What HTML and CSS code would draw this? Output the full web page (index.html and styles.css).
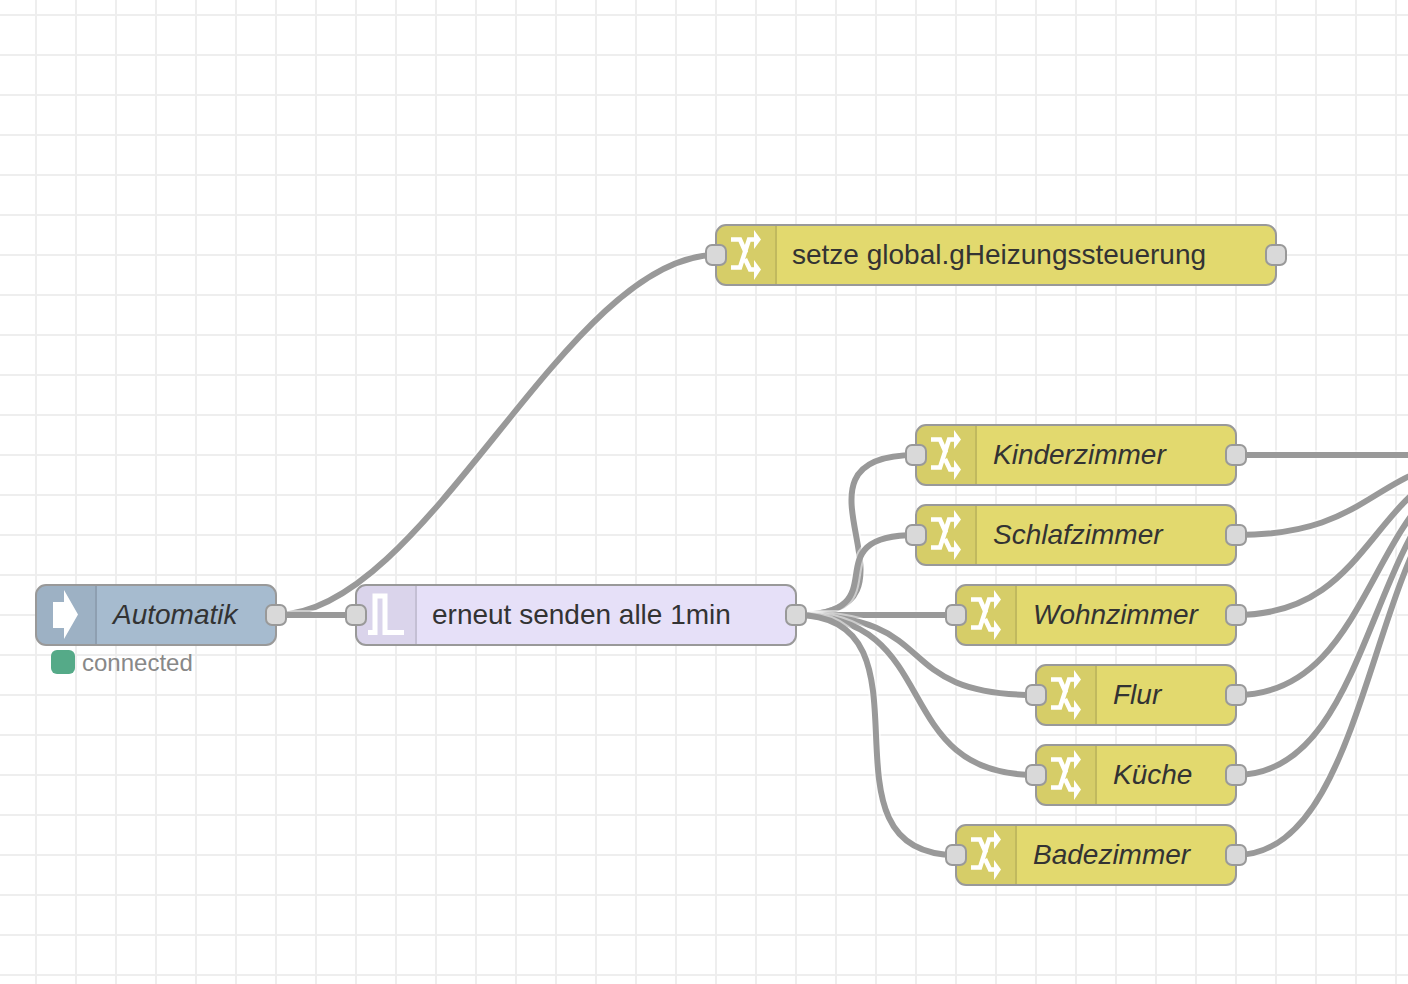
FILE: index.html
```html
<!DOCTYPE html>
<html lang="de">
<head>
<meta charset="utf-8">
<title>Flow</title>
<link rel="stylesheet" href="styles.css">
</head>
<body>
<svg width="0" height="0" class="defs">
  <defs>
    <g id="shuffle">
      <polyline class="ico-line shuffle-line" points="15,14.5 24,14.5 30,28"/>
      <polyline class="ico-line shuffle-line" points="29,34 34,44.5 39,44.5"/>
      <polyline class="ico-line shuffle-line" points="15,42.5 24,42.5 33,14.5 39,14.5"/>
      <polygon class="ico-fill" points="38,5 45,14.5 38,24"/>
      <polygon class="ico-fill" points="38,35 45,44.5 38,55"/>
    </g>
    <path id="wire-a" d="M276 615C426 615 566 255 716 255"/>
    <path id="wire-b" d="M276 615H356"/>
    <path id="wire-c" d="M796 615C946 615 766 455 916 455"/>
    <path id="wire-d" d="M796 615C904 615 808 535 916 535"/>
    <path id="wire-e" d="M796 615H956"/>
    <path id="wire-f" d="M796 615C946 615 886 695 1036 695"/>
    <path id="wire-g" d="M796 615C946 615 886 775 1036 775"/>
    <path id="wire-h" d="M796 615C946 615 806 855 956 855"/>
    <path id="wire-i" d="M1236 455H1516"/>
    <path id="wire-j" d="M1236 535C1386 535 1366 455 1516 455"/>
    <path id="wire-k" d="M1236 615C1386 615 1366 455 1516 455"/>
    <path id="wire-l" d="M1236 695C1386 695 1366 455 1516 455"/>
    <path id="wire-m" d="M1236 775C1386 775 1366 455 1516 455"/>
    <path id="wire-n" d="M1236 855C1386 855 1366 455 1516 455"/>
  </defs>
</svg>
<main class="canvas">
  <svg class="wires" width="1408" height="984" viewBox="0 0 1408 984">
    <g class="wire"><use href="#wire-a" class="outline"/><use href="#wire-a" class="line"/></g>
    <g class="wire"><use href="#wire-b" class="outline"/><use href="#wire-b" class="line"/></g>
    <g class="wire"><use href="#wire-c" class="outline"/><use href="#wire-c" class="line"/></g>
    <g class="wire"><use href="#wire-d" class="outline"/><use href="#wire-d" class="line"/></g>
    <g class="wire"><use href="#wire-e" class="outline"/><use href="#wire-e" class="line"/></g>
    <g class="wire"><use href="#wire-f" class="outline"/><use href="#wire-f" class="line"/></g>
    <g class="wire"><use href="#wire-g" class="outline"/><use href="#wire-g" class="line"/></g>
    <g class="wire"><use href="#wire-h" class="outline"/><use href="#wire-h" class="line"/></g>
    <g class="wire"><use href="#wire-i" class="outline"/><use href="#wire-i" class="line"/></g>
    <g class="wire"><use href="#wire-j" class="outline"/><use href="#wire-j" class="line"/></g>
    <g class="wire"><use href="#wire-k" class="outline"/><use href="#wire-k" class="line"/></g>
    <g class="wire"><use href="#wire-l" class="outline"/><use href="#wire-l" class="line"/></g>
    <g class="wire"><use href="#wire-m" class="outline"/><use href="#wire-m" class="line"/></g>
    <g class="wire"><use href="#wire-n" class="outline"/><use href="#wire-n" class="line"/></g>
  </svg>

  <div class="node inject n-auto">
    <div class="icon"><svg viewBox="1 1 58 58"><polygon class="ico-fill" points="17,17 28,17 28,5 42,29.5 28,54 28,43 17,43"/></svg></div>
    <span class="label italic">Automatik</span>
    <span class="port out"></span>
  </div>
  <div class="status">
    <span class="dot"></span>
    <span class="status-text">connected</span>
  </div>

  <div class="node delay n-delay">
    <span class="port in"></span>
    <div class="icon"><svg viewBox="1 1 58 58"><path class="ico-line" d="M12 47.5H19V11H29V47.5H48"/></svg></div>
    <span class="label">erneut senden alle 1min</span>
    <span class="port out"></span>
  </div>

  <div class="node change n-setze">
    <span class="port in"></span>
    <div class="icon"><svg viewBox="1 1 58 58"><use href="#shuffle"/></svg></div>
    <span class="label">setze global.gHeizungssteuerung</span>
    <span class="port out"></span>
  </div>

  <div class="node change n-kinder">
    <span class="port in"></span>
    <div class="icon"><svg viewBox="1 1 58 58"><use href="#shuffle"/></svg></div>
    <span class="label italic">Kinderzimmer</span>
    <span class="port out"></span>
  </div>
  <div class="node change n-schlaf">
    <span class="port in"></span>
    <div class="icon"><svg viewBox="1 1 58 58"><use href="#shuffle"/></svg></div>
    <span class="label italic">Schlafzimmer</span>
    <span class="port out"></span>
  </div>
  <div class="node change n-wohn">
    <span class="port in"></span>
    <div class="icon"><svg viewBox="1 1 58 58"><use href="#shuffle"/></svg></div>
    <span class="label italic">Wohnzimmer</span>
    <span class="port out"></span>
  </div>
  <div class="node change n-flur">
    <span class="port in"></span>
    <div class="icon"><svg viewBox="1 1 58 58"><use href="#shuffle"/></svg></div>
    <span class="label italic">Flur</span>
    <span class="port out"></span>
  </div>
  <div class="node change n-kueche">
    <span class="port in"></span>
    <div class="icon"><svg viewBox="1 1 58 58"><use href="#shuffle"/></svg></div>
    <span class="label italic">Küche</span>
    <span class="port out"></span>
  </div>
  <div class="node change n-bad">
    <span class="port in"></span>
    <div class="icon"><svg viewBox="1 1 58 58"><use href="#shuffle"/></svg></div>
    <span class="label italic">Badezimmer</span>
    <span class="port out"></span>
  </div>
</main>
</body>
</html>
```
FILE: styles.css
```css
html, body {
  margin: 0;
  padding: 0;
  background: #fff;
  overflow: hidden;
}

.defs {
  position: absolute;
}

.canvas {
  position: relative;
  width: 1408px;
  height: 984px;
  overflow: hidden;
  background-color: #fff;
  background-image:
    linear-gradient(to right, #eee 2px, transparent 2px),
    linear-gradient(to bottom, #eee 2px, transparent 2px);
  background-size: 40px 40px;
  background-position: 35px 0, 0 14px;
  font-family: "Liberation Sans", Arial, sans-serif;
}

.wires {
  position: absolute;
  left: 0;
  top: 0;
}

.wire use {
  fill: none;
}

.outline {
  stroke: #fff;
  stroke-width: 10;
  stroke-opacity: 0.5;
}

.line {
  stroke: #999;
  stroke-width: 6;
}

.node {
  position: absolute;
  box-sizing: border-box;
  height: 62px;
  display: flex;
  align-items: stretch;
  border: 2px solid #999;
  border-radius: 11px;
  color: #333;
}

.inject { background: #a6bbcf; }
.delay { background: #e6e0f8; }
.change { background: #e2d96e; }

.n-auto { left: 35px; top: 584px; width: 242px; }
.n-delay { left: 355px; top: 584px; width: 442px; }
.n-setze { left: 715px; top: 224px; width: 562px; }
.n-kinder { left: 915px; top: 424px; width: 322px; }
.n-schlaf { left: 915px; top: 504px; width: 322px; }
.n-wohn { left: 955px; top: 584px; width: 282px; }
.n-flur { left: 1035px; top: 664px; width: 202px; }
.n-kueche { left: 1035px; top: 744px; width: 202px; }
.n-bad { left: 955px; top: 824px; width: 282px; }

.icon {
  box-sizing: border-box;
  flex: 0 0 60px;
  width: 60px;
  height: 58px;
  background: rgba(0, 0, 0, 0.05);
  border-right: 2px solid rgba(0, 0, 0, 0.1);
  border-radius: 9px 0 0 9px;
}

.icon svg {
  display: block;
  width: 58px;
  height: 58px;
}

.ico-fill {
  fill: #fff;
}

.ico-line {
  fill: none;
  stroke: #fff;
  stroke-width: 5;
}

.shuffle-line {
  stroke-width: 4.5;
}

.label {
  padding-left: 15px;
  font-size: 28px;
  line-height: 58px;
  white-space: nowrap;
}

.italic {
  font-style: italic;
  padding-left: 16px;
}

.port {
  position: absolute;
  top: 18px;
  box-sizing: border-box;
  width: 22px;
  height: 22px;
  background: #d9d9d9;
  border: 2px solid #999;
  border-radius: 7px;
}

.port.in { left: -12px; }
.port.out { right: -12px; }

.status {
  position: absolute;
  left: 51px;
  top: 650px;
  display: flex;
  align-items: flex-start;
  gap: 7px;
}

.dot {
  width: 24px;
  height: 24px;
  border-radius: 6px;
  background: #55aa88;
}

.status-text {
  font-size: 24px;
  line-height: 26px;
  color: #888;
}
```
